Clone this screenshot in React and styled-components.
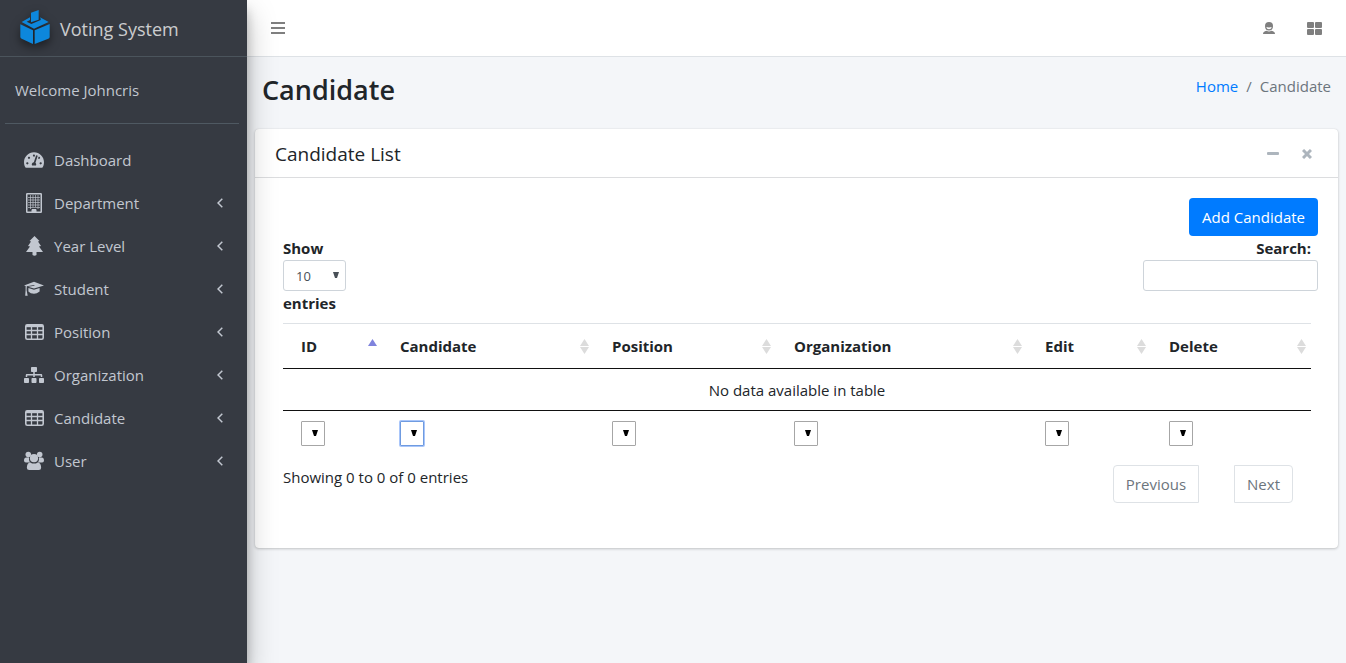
import React from "react";
import styled, { createGlobalStyle } from "styled-components";
import { FaTachometerAlt, FaSitemap } from "react-icons/fa";

const GlobalStyle = createGlobalStyle`
  *, *::before, *::after { box-sizing: border-box; }
  body {
    margin: 0;
    background: #f4f6f9;
    color: #212529;
    font-family: "Open Sans", "Liberation Sans", sans-serif;
    font-size: 15px;
    line-height: 24px;
  }
  button, input, select { font: inherit; color: inherit; }
`;

const Page = styled.div`
  display: flex;
  min-height: 100vh;
`;

const Sidebar = styled.aside`
  position: relative;
  z-index: 2;
  flex: 0 0 247px;
  background: #363a42;
  color: #c2c7d0;
  box-shadow: 0 14px 28px rgba(0, 0, 0, 0.25), 0 10px 10px rgba(0, 0, 0, 0.22);
`;

const Brand = styled.a`
  display: flex;
  align-items: center;
  gap: 10px;
  height: 57px;
  padding: 2px 20px 0;
  border-bottom: 1px solid #4b545c;
  color: rgba(255, 255, 255, 0.75);
  font-size: 18px;
  font-weight: 400;
  text-decoration: none;

  svg {
    filter: drop-shadow(0 4px 5px rgba(0, 0, 0, 0.5));
    margin-bottom: 4px;
    overflow: visible;
  }
`;

const Welcome = styled.div`
  margin: 0 8px 16px 5px;
  padding: 21px 10px;
  border-bottom: 1px solid #4f5962;
`;

const Menu = styled.ul`
  display: grid;
  gap: 3px;
  margin: 0;
  padding: 0 8px;
  list-style: none;
`;

const MenuLink = styled.a`
  display: grid;
  grid-template-columns: 36px 1fr 6px;
  align-items: center;
  column-gap: 10px;
  height: 40px;
  padding: 0 16px 0 0;
  color: inherit;
  text-decoration: none;
`;

const MenuIcon = styled.span`
  display: flex;
  justify-content: center;
  padding-left: 16px;
`;

const Main = styled.div`
  flex: 1;
  min-width: 0;
`;

const TopBar = styled.header`
  display: flex;
  align-items: center;
  justify-content: space-between;
  height: 57px;
  padding: 0 16px;
  background: #fff;
  border-bottom: 1px solid #dee2e6;
`;

const TopActions = styled.div`
  display: flex;
  gap: 16px;
`;

const IconButton = styled.button`
  display: flex;
  align-items: center;
  justify-content: center;
  width: 30px;
  height: 32px;
  padding: 0;
  border: 0;
  background: none;
  color: #7f7f7f;
`;

const PageHeader = styled.div`
  display: flex;
  justify-content: space-between;
  padding: 15px 15px 17px;
`;

const Title = styled.h1`
  margin: 0;
  font-size: 27px;
  font-weight: 600;
  line-height: 36px;
  padding-bottom: 4px;
`;

const Breadcrumb = styled.nav`
  display: flex;
  gap: 8px;
  padding-top: 2px;
  color: #6c757d;

  a {
    color: #007bff;
    text-decoration: none;
  }
`;

const Card = styled.section`
  margin: 0 8px;
  border-radius: 4px;
  background: #fff;
  box-shadow: 0 0 1px rgba(0, 0, 0, 0.125), 0 1px 3px rgba(0, 0, 0, 0.2);
`;

const CardHeader = styled.div`
  display: flex;
  align-items: center;
  justify-content: space-between;
  height: 49px;
  padding: 1px 16px 0 20px;
  border-bottom: 1px solid #dcdddf;
`;

const CardTitle = styled.h3`
  margin: 0;
  font-size: 19px;
  font-weight: 400;
`;

const CardTools = styled.div`
  display: flex;
  gap: 4px;

  button { color: #adb5bd; }
`;

const CardBody = styled.div`
  padding: 20px 20px 45px;
`;

const ActionRow = styled.div`
  display: flex;
  justify-content: flex-end;
`;

const PrimaryButton = styled.button`
  height: 38px;
  padding: 0 13px;
  border: 0;
  border-radius: 4px;
  background: #007bff;
  color: #fff;
`;

const Controls = styled.div`
  display: flex;
  justify-content: space-between;
  padding-left: 8px;
  margin-bottom: 8px;
`;

const LengthLabel = styled.label`
  display: flex;
  flex-direction: column;
  align-items: flex-start;
  font-weight: 700;
`;

const SearchLabel = styled.label`
  display: flex;
  flex-direction: column;
  font-weight: 700;
  text-align: right;

  span { padding-right: 7px; }
`;

const SearchInput = styled.input`
  width: 175px;
  height: 31px;
  padding: 4px 8px;
  border: 1px solid #ced4da;
  border-radius: 3px;
  background: #fff;
  font-size: 14px;
`;

const SelectBox = styled.span`
  display: inline-grid;
  align-items: center;
  vertical-align: top;

  > * { grid-area: 1 / 1; }

  svg {
    justify-self: end;
    margin-right: 7px;
    margin-bottom: 2px;
    pointer-events: none;
  }
`;

const Select = styled.select`
  appearance: none;
  width: ${(p) => (p.$large ? 63 : 24)}px;
  height: ${(p) => (p.$large ? 31 : 25)}px;
  padding: 0 0 0 ${(p) => (p.$large ? 12 : 4)}px;
  border: 1px solid ${(p) => (p.$active ? "#6f9be0" : p.$large ? "#ced4da" : "#a6a6a6")};
  border-radius: ${(p) => (p.$large ? 3 : 1)}px;
  outline: 0;
  box-shadow: ${(p) => (p.$active ? "0 0 0 1px #a9c6fa" : "none")};
  background: #fff;
  color: #495057;
  font-size: 13px;
  font-weight: 400;
`;

const TableWrap = styled.div`
  padding: 0 7px 0 8px;
`;

const Table = styled.table`
  width: 100%;
  table-layout: fixed;
  border-collapse: separate;
  border-spacing: 0;
  border-top: 1px solid #dee2e6;

  th, td {
    padding: 0 18px;
    text-align: left;
  }

  thead th {
    height: 45px;
    padding-right: 5px;
    border-bottom: 1px solid #111;
    font-weight: 700;
  }

  tbody td {
    height: 42px;
    border-bottom: 1px solid #111;
    text-align: center;
  }

  tfoot th {
    height: 45px;
  }
`;

const HeadCell = styled.div`
  display: flex;
  align-items: center;
  justify-content: space-between;
`;

const Footer = styled.div`
  display: flex;
  align-items: flex-start;
  justify-content: space-between;
  padding: 9px 25px 0 8px;
`;

const Pagination = styled.div`
  display: flex;
  gap: 35px;
`;

const PageButton = styled.button`
  height: 38px;
  padding: 0 12px;
  border: 1px solid #dee2e6;
  border-radius: ${(p) => (p.$end ? "0 4px 4px 0" : "4px 0 0 4px")};
  background: #fff;
  color: #6c757d;
`;

const BallotLogo = () => (
  <svg width="30" height="34" viewBox="0 0 90 102" fill="#0d87dc" aria-hidden="true">
    <path d="M33 8L56 0V29L33 37Z" />
    <path d="M5 36L30 22V30L20 35L34 42L62 30V26L60 22L86 36L42 56Z" />
    <path d="M1 43L39 61V102L5 86Q1 84 1 80Z" />
    <path d="M44 61L89 42V80Q89 84 85 86L44 102Z" />
  </svg>
);

const BuildingIcon = () => (
  <svg width="16" height="20" viewBox="0 0 16 20" fill="none" stroke="currentColor" aria-hidden="true">
    <rect x="0.75" y="0.75" width="14.5" height="18.5" rx="0.5" strokeWidth="1.5" />
    <path d="M4.500 2V16M7 2V14M9.500 2V14M12 2V16M2 4.500H14M2 7H14M2 9.500H14M2 12H14M2 14.500H14" strokeWidth="0.9" opacity="0.75" />
    <path d="M6 19V16.500H10V19Z" fill="currentColor" strokeWidth="1" />
  </svg>
);

const TreeIcon = () => (
  <svg width="17" height="20" viewBox="0 0 17 20" fill="currentColor" aria-hidden="true">
    <path d="M8.500 0L13.500 5L12 5.500L15 10L13 10.500L17 16H10.500V19Q8.500 20.500 6.500 19V16H0L4 10.500L2 10L5 5.500L3.500 5Z" />
  </svg>
);

const CapIcon = () => (
  <svg width="25" height="18" viewBox="0 0 25 18" fill="currentColor" aria-hidden="true">
    <path d="M12.500 0L25 4.500L12.500 8.500L5 6.200L13 5V4L3.500 5.700L3.300 10.500L4.600 17.500H1.500L2 10.500V5.300L0 4.500Z" />
    <path d="M5.500 7.800L12.500 10L19.500 7.800V12Q16 15 12.500 15Q8 15 5.500 12Z" />
  </svg>
);

const TableIcon = () => (
  <svg width="19" height="16" viewBox="0 0 19 16" fill="none" stroke="currentColor" aria-hidden="true">
    <rect x="0.8" y="0.8" width="17.400" height="14.400" rx="1.500" strokeWidth="1.600" />
    <path d="M1 2H18" strokeWidth="2.400" />
    <path d="M1 6.500H18M1 10.500H18M6.500 2V15M12.500 2V15" strokeWidth="1.300" />
  </svg>
);

const UsersIcon = () => (
  <svg width="21" height="20" viewBox="0 0 21 20" fill="currentColor" aria-hidden="true">
    <circle cx="4.500" cy="3.300" r="2.900" />
    <circle cx="16.500" cy="3.300" r="2.900" />
    <path d="M2.500 6.300H5.300Q5 11 7 11.500H2Q0 11.500 0 9.500Q0 6.500 2.500 6.300ZM18.500 6.300H15.700Q16 11 14 11.500H19Q21 11.500 21 9.500Q21 6.500 18.500 6.300Z" />
    <circle cx="10.500" cy="7" r="4.300" />
    <path d="M6.500 11.500Q10.500 14 14.500 11.500Q18 12 18 17Q18 19.500 15.500 19.500H5.500Q3 19.500 3 17Q3 12 6.500 11.500Z" />
  </svg>
);

const ChevronIcon = () => (
  <svg width="6" height="10" viewBox="0 0 6 10" fill="none" stroke="currentColor" strokeWidth="1.500" aria-hidden="true">
    <path d="M5.300 0.700L1 5L5.300 9.300" />
  </svg>
);

const MenuBarsIcon = () => (
  <svg width="14" height="12" viewBox="0 0 14 12" fill="currentColor" aria-hidden="true">
    <path d="M0 0H14V2H0ZM0 5H14V7H0ZM0 10H14V12H0Z" />
  </svg>
);

const PersonIcon = () => (
  <svg width="12" height="12" viewBox="0 0 12 12" fill="currentColor" aria-hidden="true">
    <path fillRule="evenodd" d="M6 0Q10 0 10 4Q10 8.500 6 8.500Q2 8.500 2 4Q2 0 6 0ZM3.300 5Q3.800 7.300 6 7.300Q8.200 7.300 8.700 5Q6 5.800 3.300 5Z" />
    <path d="M0 12Q0 9.500 3.500 8.800Q6 10.200 8.500 8.800Q12 9.500 12 12Z" />
  </svg>
);

const GridIcon = () => (
  <svg width="16" height="13" viewBox="0 0 16 13" fill="currentColor" aria-hidden="true">
    <rect width="7" height="6" rx="1" />
    <rect x="8" width="7" height="6" rx="1" />
    <rect y="7" width="7" height="6" rx="1" />
    <rect x="8" y="7" width="7" height="6" rx="1" />
  </svg>
);

const MinusIcon = () => (
  <svg width="12" height="4" viewBox="0 0 12 4" fill="currentColor" aria-hidden="true">
    <rect width="12" height="3" rx="1" />
  </svg>
);

const CloseIcon = () => (
  <svg width="10" height="10" viewBox="0 0 10 10" fill="none" stroke="currentColor" strokeWidth="3" aria-hidden="true">
    <path d="M1 1L9 9M9 1L1 9" />
  </svg>
);

const SortIcon = ({ active }) => (
  <svg width="9" height="15" viewBox="0 0 9 15" aria-hidden="true">
    <path d="M4.500 0L9 7H0Z" fill={active ? "#7f83dd" : "#dcdcdc"} />
    {!active && <path d="M0 8H9L4.500 15Z" fill="#dcdcdc" />}
  </svg>
);

const DropArrow = ({ color }) => (
  <svg width="6" height="6" viewBox="0 0 6 6" fill={color} aria-hidden="true">
    <path d="M0 0H6L4 6H2Z" />
  </svg>
);

const menu = [
  { label: "Dashboard", icon: <FaTachometerAlt size={20} /> },
  { label: "Department", icon: <BuildingIcon />, open: true },
  { label: "Year Level", icon: <TreeIcon />, open: true },
  { label: "Student", icon: <CapIcon />, open: true },
  { label: "Position", icon: <TableIcon />, open: true },
  { label: "Organization", icon: <FaSitemap size={20} />, open: true },
  { label: "Candidate", icon: <TableIcon />, open: true },
  { label: "User", icon: <UsersIcon />, open: true },
];

const columns = [
  { name: "ID", width: 99 },
  { name: "Candidate", width: 212 },
  { name: "Position", width: 182 },
  { name: "Organization", width: 251 },
  { name: "Edit", width: 124 },
  { name: "Delete", width: 160 },
];

export default function App() {
  return (
    <>
      <GlobalStyle />
      <Page>
        <Sidebar>
          <Brand href="#">
            <BallotLogo />
            <span>Voting System</span>
          </Brand>
          <Welcome>Welcome Johncris</Welcome>
          <nav>
            <Menu>
              {menu.map((item) => (
                <li key={item.label}>
                  <MenuLink href="#">
                    <MenuIcon>{item.icon}</MenuIcon>
                    <span>{item.label}</span>
                    {item.open && <ChevronIcon />}
                  </MenuLink>
                </li>
              ))}
            </Menu>
          </nav>
        </Sidebar>
        <Main>
          <TopBar>
            <IconButton aria-label="Toggle menu"><MenuBarsIcon /></IconButton>
            <TopActions>
              <IconButton aria-label="Account"><PersonIcon /></IconButton>
              <IconButton aria-label="Apps"><GridIcon /></IconButton>
            </TopActions>
          </TopBar>
          <PageHeader>
            <Title>Candidate</Title>
            <Breadcrumb aria-label="Breadcrumb">
              <a href="#">Home</a>
              <span>/</span>
              <span>Candidate</span>
            </Breadcrumb>
          </PageHeader>
          <Card>
            <CardHeader>
              <CardTitle>Candidate List</CardTitle>
              <CardTools>
                <IconButton aria-label="Collapse"><MinusIcon /></IconButton>
                <IconButton aria-label="Close"><CloseIcon /></IconButton>
              </CardTools>
            </CardHeader>
            <CardBody>
              <ActionRow>
                <PrimaryButton>Add Candidate</PrimaryButton>
              </ActionRow>
              <Controls>
                <LengthLabel>
                  Show
                  <SelectBox>
                    <Select $large defaultValue="10">
                      <option>10</option>
                      <option>25</option>
                      <option>50</option>
                    </Select>
                    <DropArrow color="#495057" />
                  </SelectBox>
                  entries
                </LengthLabel>
                <SearchLabel>
                  <span>Search:</span>
                  <SearchInput type="search" />
                </SearchLabel>
              </Controls>
              <TableWrap>
                <Table>
                  <colgroup>
                    {columns.map((c) => <col key={c.name} width={c.width} />)}
                  </colgroup>
                  <thead>
                    <tr>
                      {columns.map((c, i) => (
                        <th key={c.name} scope="col">
                          <HeadCell>
                            {c.name}
                            <SortIcon active={i === 0} />
                          </HeadCell>
                        </th>
                      ))}
                    </tr>
                  </thead>
                  <tbody>
                    <tr>
                      <td colSpan={6}>No data available in table</td>
                    </tr>
                  </tbody>
                  <tfoot>
                    <tr>
                      {columns.map((c) => (
                        <th key={c.name}>
                          <SelectBox>
                            <Select aria-label={`Filter ${c.name}`} $active={c.name === "Candidate"}>
                              <option value="" />
                            </Select>
                            <DropArrow color="#000" />
                          </SelectBox>
                        </th>
                      ))}
                    </tr>
                  </tfoot>
                </Table>
              </TableWrap>
              <Footer>
                <span>Showing 0 to 0 of 0 entries</span>
                <Pagination>
                  <PageButton>Previous</PageButton>
                  <PageButton $end>Next</PageButton>
                </Pagination>
              </Footer>
            </CardBody>
          </Card>
        </Main>
      </Page>
    </>
  );
}
